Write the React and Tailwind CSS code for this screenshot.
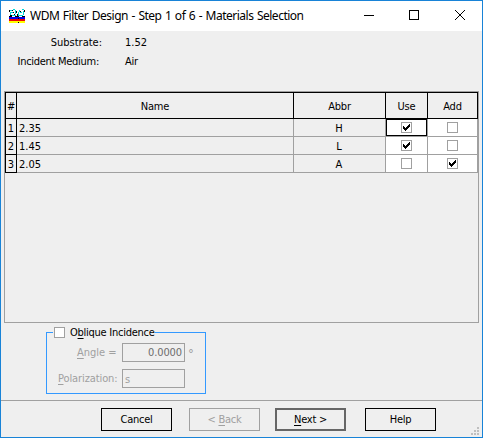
import React from 'react';

function Check({ on }) {
  return (
    <span className="block h-[11px] w-[11px] shrink-0 border border-[#a0a0a0] bg-white">
      {on && (
        <svg width="9" height="9" viewBox="0 0 9 9" shapeRendering="crispEdges">
          <path d="M1 3h1v3h-1zM2 4h1v3h-1zM3 5h1v3h-1zM4 4h1v3h-1zM5 3h1v3h-1zM6 2h1v3h-1zM7 1h1v3h-1z" fill="#000" />
        </svg>
      )}
    </span>
  );
}

function AppIcon() {
  return (
    <svg className="mt-[8px] ml-[8px] shrink-0" width="16" height="15" viewBox="0 0 16 15" shapeRendering="crispEdges">
      <path d="M0 8h16v2H0z" fill="#0000e8" />
      <path d="M0 10h16v2H0z" fill="#f00000" />
      <path d="M0 12h16v2H0z" fill="#ffff00" />
      <path d="M1 1h2v1H1zM4 0h2v1H4zM6 1h1v4H6zM1 3h1v3H1zM3 6h4v1H3zM10 1h1v2h-1zM13 0h2v1h-2zM14 2h1v4h-1zM9 3h1v4H9zM10 6h4v1h-4zM2 3h2v1H2zM11 3h2v1h-2z" fill="#00d8d8" />
      <path d="M0 1h1v2H0zM3 1h1v1H3zM4 3h1v1H4zM1 6h2v1H1zM5 5h1v1H5zM7 2h1v2H7zM8 5h1v2H8zM11 2h1v1h-1zM15 1h1v2h-1zM0 7h3v1H0zM6 7h4v1H6zM13 7h3v1h-3zM9 9h1v1H9zM9 13h1v1H9z" fill="#000" />
    </svg>
  );
}

const rows = [
  { name: '2.35', abbr: 'H', use: true, add: false },
  { name: '1.45', abbr: 'L', use: true, add: false },
  { name: '2.05', abbr: 'A', use: false, add: true },
];

const button = 'flex h-[23px] w-[71px] items-center justify-center pt-px tracking-[-0.25px]';

export default function App() {
  return (
    <div className="flex h-[438px] w-[483px] flex-col overflow-hidden border border-[#1883d7] bg-[#efefef] font-['DejaVu_Sans_Condensed','DejaVu_Sans',sans-serif] text-[11px] leading-[14px] text-black whitespace-pre">
      <header className="flex h-[30px] shrink-0 bg-white">
        <AppIcon />
        <h1 className="mt-[5px] ml-[5px] w-[285px] font-['Noto_Sans',sans-serif] text-[12px] leading-[20px] tracking-[-0.5px] [word-spacing:0.9px]">WDM Filter Design - Step 1 of 6 - Materials Selection</h1>
        <svg className="mt-[8px] ml-[48px]" width="104" height="12" viewBox="0 0 104 12" fill="none" stroke="#000">
          <path d="M1 6.5h10M46.5 1.5h9v9h-9z" shapeRendering="crispEdges" />
          <path d="M92 1l10 10M102 1l-10 10" />
        </svg>
      </header>

      <dl className="grid h-[60px] shrink-0 grid-cols-[101px_1fr] content-start gap-x-[23px] gap-y-[5px] pt-[5px]">
        <dt className="text-right">Substrate:</dt>
        <dd>1.52</dd>
        <dt className="pr-[3px] text-right tracking-[-0.28px]">Incident Medium:</dt>
        <dd className="tracking-[-0.2px]">Air</dd>
      </dl>

      <section className="ml-[3px] h-[232px] w-[475px] shrink-0 border border-[#a0a0a0]">
        <div className="grid h-[27px] grid-cols-[12px_277px_92px_42px_50px] grid-rows-[25px] border-y border-black text-center leading-[27px] tracking-[-0.2px]">
          <div className="border-x border-black">#</div>
          <div className="border-r border-black">Name</div>
          <div className="border-r border-black">Abbr</div>
          <div className="border-r border-black">Use</div>
          <div className="border-r border-black">Add</div>
        </div>
        {rows.map((row, i) => (
          <div key={row.name} className="grid h-[18px] grid-cols-[12px_277px_92px_42px_50px] grid-rows-[18px] leading-[20px]">
            <div className="border-x border-b border-black text-center">{i + 1}</div>
            <div className="border-r border-b border-[#a0a0a0] pl-[2px]">{row.name}</div>
            <div className="border-r border-b border-[#a0a0a0] pr-px text-center">{row.abbr}</div>
            <div className="relative flex justify-center border-r border-b border-[#a0a0a0] bg-white pt-[3px]">
              {i === 0 && <span className="absolute inset-0 border border-black" />}
              <Check on={row.use} />
            </div>
            <div className="flex justify-center border-r border-b border-[#a0a0a0] bg-white pt-[3px]">
              <Check on={row.add} />
            </div>
          </div>
        ))}
      </section>

      <section className="h-[77px] shrink-0 pt-[9px] pl-[45px]">
        <fieldset className="h-[62px] w-[160px] border border-[#3399ff]">
          <div className="-mt-[8px] ml-[6px] flex h-[15px] w-[102px] items-center gap-[5px] bg-[#efefef] pl-px">
            <Check />
            <label className="pt-px tracking-[-0.26px]">O<u className="underline-offset-2">b</u>lique Incidence</label>
          </div>
          <div className="mt-[3px] flex h-[19px] text-[#a0a0a0]">
            <label className="ml-[30px] w-[42px] shrink-0 pt-[3px]"><u className="underline-offset-2">A</u>ngle =</label>
            <div className="ml-[3px] h-[19px] w-[63px] shrink-0 border border-[#a0a0a0] pt-[2px] pr-[2px] text-right tracking-[-0.1px] text-[#6d6d6d]">0.0000</div>
            <span className="ml-[3px] pt-[4px] text-[13px]">°</span>
          </div>
          <div className="mt-[7px] flex h-[19px] text-[#a0a0a0]">
            <label className="ml-[11px] w-[61px] shrink-0 pt-[3px] tracking-[-0.1px]"><u className="underline-offset-2">P</u>olarization:</label>
            <div className="ml-[3px] h-[19px] w-[63px] shrink-0 border border-[#a0a0a0] pt-[3px] pl-[2px]">s</div>
          </div>
        </fieldset>
      </section>

      <footer className="relative flex h-[37px] shrink-0 border-t border-[#a0a0a0] pt-[7px] pl-[100px]">
        <button className={`${button} border border-black`}>Cancel</button>
        <button className={`${button} ml-[17px] border border-[#a0a0a0] text-[#a0a0a0]`}>&lt; <u className="underline-offset-2">B</u>ack</button>
        <button className={`${button} ml-[15px] border-2 border-[#666]`}><u className="underline-offset-2">N</u>ext &gt;</button>
        <button className={`${button} ml-[19px] border border-black`}>Help</button>
        <svg className="absolute right-[3px] bottom-[2px]" width="8" height="8" viewBox="0 0 8 8" fill="#bfbfbf" shapeRendering="crispEdges">
          <path d="M6 0h2v2H6zM3 3h2v2H3zM6 3h2v2H6zM0 6h2v2H0zM3 6h2v2H3zM6 6h2v2H6z" />
        </svg>
      </footer>
    </div>
  );
}
